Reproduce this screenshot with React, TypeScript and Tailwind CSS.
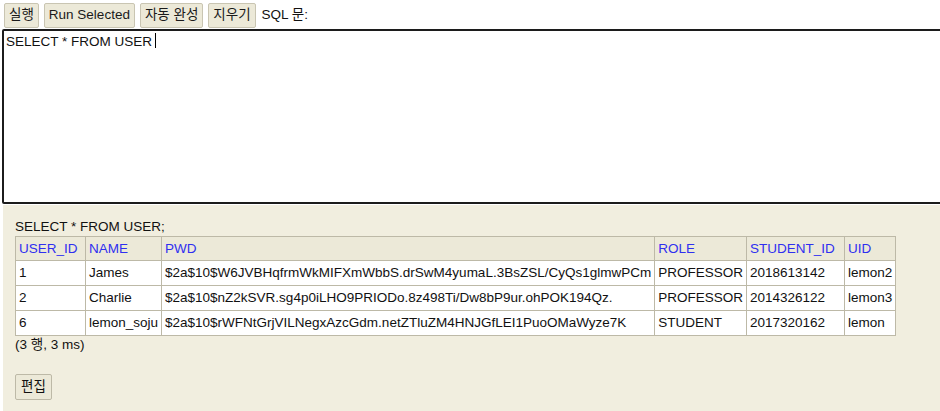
import React from "react";

const columns = [
  { name: "USER_ID", w: "w-[70px]" },
  { name: "NAME", w: "w-[76px]" },
  { name: "PWD", w: "w-[492px]" },
  { name: "ROLE", w: "w-[91px]" },
  { name: "STUDENT_ID", w: "w-[98px]" },
  { name: "UID", w: "w-[51px]" },
];

const rows = [
  ["1", "James", "$2a$10$W6JVBHqfrmWkMIFXmWbbS.drSwM4yumaL.3BsZSL/CyQs1glmwPCm", "PROFESSOR", "2018613142", "lemon2"],
  ["2", "Charlie", "$2a$10$nZ2kSVR.sg4p0iLHO9PRIODo.8z498Ti/Dw8bP9ur.ohPOK194Qz.", "PROFESSOR", "2014326122", "lemon3"],
  ["6", "lemon_soju", "$2a$10$rWFNtGrjVILNegxAzcGdm.netZTluZM4HNJGfLEI1PuoOMaWyze7K", "STUDENT", "2017320162", "lemon"],
];

function Btn({ children }: { children: React.ReactNode }) {
  return (
    <button
      type="button"
      className="h-[25px] rounded-[2px] border border-[#c9c5b2] bg-[#ece9d8] px-[4px] leading-[20px] text-[#1a1a1a]"
    >
      {children}
    </button>
  );
}

export default function App() {
  return (
    <div className="flex h-[411px] w-[940px] flex-col overflow-hidden bg-white font-['Liberation_Sans','Noto_Sans_CJK_KR',Arial,sans-serif] text-[13.5px] text-[#111]">
      {/* toolbar */}
      <div className="flex h-[29px] shrink-0 items-center gap-[5px] pl-[4px] pt-[1px]">
        <Btn>실행</Btn>
        <Btn>Run Selected</Btn>
        <Btn>자동 완성</Btn>
        <Btn>지우기</Btn>
        <span className="ml-[1px]">SQL 문:</span>
      </div>

      {/* editor */}
      <div className="ml-[2px] h-[175px] w-[980px] shrink-0 rounded-[2px] border-2 border-[#1c1c1c] px-[2px] pt-0 leading-[18px]">
        SELECT * FROM USER
        <span className="ml-[3px] inline-block h-[15px] w-px translate-y-[2px] bg-black" />
      </div>

      {/* result panel */}
      <div className="ml-[3px] mt-[1px] flex-1 bg-[#f1eedf] pl-[12px] pt-[14px]">
        <div className="leading-[16px]">SELECT * FROM USER;</div>
        <table className="mt-[1px] border-collapse bg-white leading-[16px]">
          <colgroup>
            {columns.map((c) => (
              <col key={c.name} className={c.w} />
            ))}
          </colgroup>
          <thead>
            <tr className="h-[24px] bg-[#ece9d8]">
              {columns.map((c) => (
                <th
                  key={c.name}
                  className="border border-[#bdb9a7] px-[3px] text-left font-normal text-[#2f2ff0]"
                >
                  {c.name}
                </th>
              ))}
            </tr>
          </thead>
          <tbody>
            {rows.map((r) => (
              <tr key={r[0]} className="h-[25px]">
                {r.map((v, i) => (
                  <td key={i} className="whitespace-nowrap border border-[#bdb9a7] px-[3px]">
                    {v}
                  </td>
                ))}
              </tr>
            ))}
          </tbody>
        </table>
        <div className="mt-[1px] leading-[16px]">(3 행, 3 ms)</div>
        <button
          type="button"
          className="mt-[21px] h-[26px] rounded-[2px] border border-[#bdb9a7] bg-[#ece9d8] px-[5px] leading-[20px]"
        >
          편집
        </button>
      </div>
    </div>
  );
}
